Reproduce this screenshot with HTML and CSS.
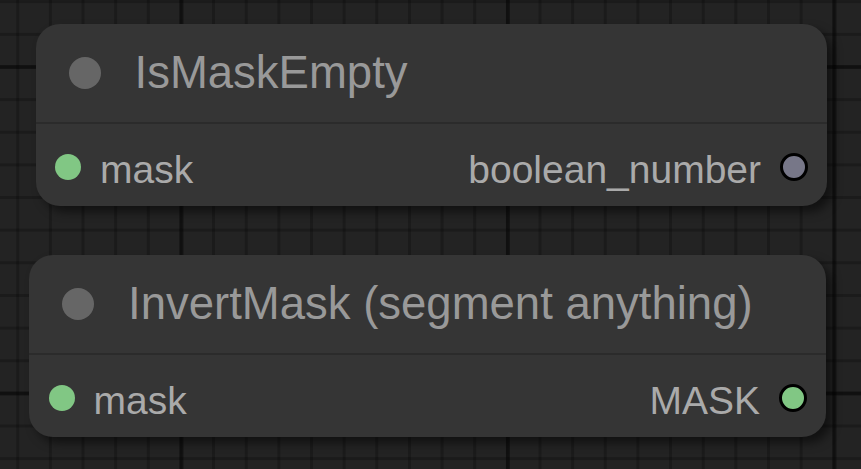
FILE: index.html
```html
<!DOCTYPE html>
<html lang="en">
<head>
<meta charset="utf-8">
<title>Nodes</title>
<link rel="stylesheet" href="styles.css">
</head>
<body>
<div class="canvas">
  <div class="node node--first">
    <div class="node__title">
      <span class="node__toggle"></span>
      <span class="node__name">IsMaskEmpty</span>
    </div>
    <div class="node__body">
      <div class="slot">
        <span class="pin pin--mask"></span>
        <span class="slot__label">mask</span>
      </div>
      <div class="slot">
        <span class="slot__label">boolean_number</span>
        <span class="pin pin--out pin--number"></span>
      </div>
    </div>
  </div>
  <div class="node node--second">
    <div class="node__title">
      <span class="node__toggle"></span>
      <span class="node__name">InvertMask (segment anything)</span>
    </div>
    <div class="node__body">
      <div class="slot">
        <span class="pin pin--mask"></span>
        <span class="slot__label">mask</span>
      </div>
      <div class="slot">
        <span class="slot__label">MASK</span>
        <span class="pin pin--out pin--mask"></span>
      </div>
    </div>
  </div>
</div>
</body>
</html>
```
FILE: styles.css
```css
html, body {
  margin: 0;
  padding: 0;
  width: 861px;
  height: 469px;
  overflow: hidden;
}

body {
  background-color: #232323;
  background-image:
    linear-gradient(to right, rgba(0,0,0,0.4) 0 4px, transparent 4px),
    linear-gradient(to bottom, rgba(0,0,0,0.4) 0 4px, transparent 4px),
    linear-gradient(to right, rgba(0,0,0,0.24) 0 3px, transparent 3px),
    linear-gradient(to bottom, rgba(0,0,0,0.24) 0 3px, transparent 3px);
  background-size:
    326.5px 100%,
    100% 326.5px,
    32.65px 100%,
    100% 32.65px;
  background-position:
    179.5px 0,
    0 65px,
    16.25px 0,
    0 0.2px;
  font-family: "Liberation Sans", Arial, sans-serif;
}

.canvas {
  display: flex;
  flex-direction: column;
  align-items: flex-start;
  gap: 49px;
  padding-top: 24px;
}

.node {
  background: #353535;
  border-radius: 24px;
  box-shadow: 6px 6px 10px rgba(0, 0, 0, 0.5);
  overflow: hidden;
}

.node--first {
  margin-left: 35.5px;
  width: 791.5px;
}

.node--second {
  margin-left: 29px;
  width: 797px;
}

.node__title {
  height: 98px;
  display: flex;
  align-items: center;
  padding-left: 33px;
  gap: 34px;
  border-bottom: 2px solid #2b2b2b;
}

.node__toggle {
  width: 32px;
  height: 32px;
  border-radius: 50%;
  background: #666666;
  flex: none;
}

.node__name {
  color: #999999;
  font-size: 45.5px;
  white-space: nowrap;
}

.node__body {
  height: 82px;
  box-sizing: border-box;
  padding: 4px 19px 0 19.5px;
  display: flex;
  align-items: center;
  justify-content: space-between;
}

.slot {
  display: flex;
  align-items: center;
  gap: 19px;
}

.slot__label {
  color: #aaaaaa;
  font-size: 39px;
  white-space: nowrap;
  padding-top: 6px;
}

.pin {
  width: 26px;
  height: 26px;
  border-radius: 50%;
  flex: none;
  box-sizing: border-box;
}

.pin--mask {
  background: #81c784;
}

.pin--number {
  background: #777788;
}

.pin--out {
  width: 28px;
  height: 28px;
  border: 3px solid #000000;
}
```
